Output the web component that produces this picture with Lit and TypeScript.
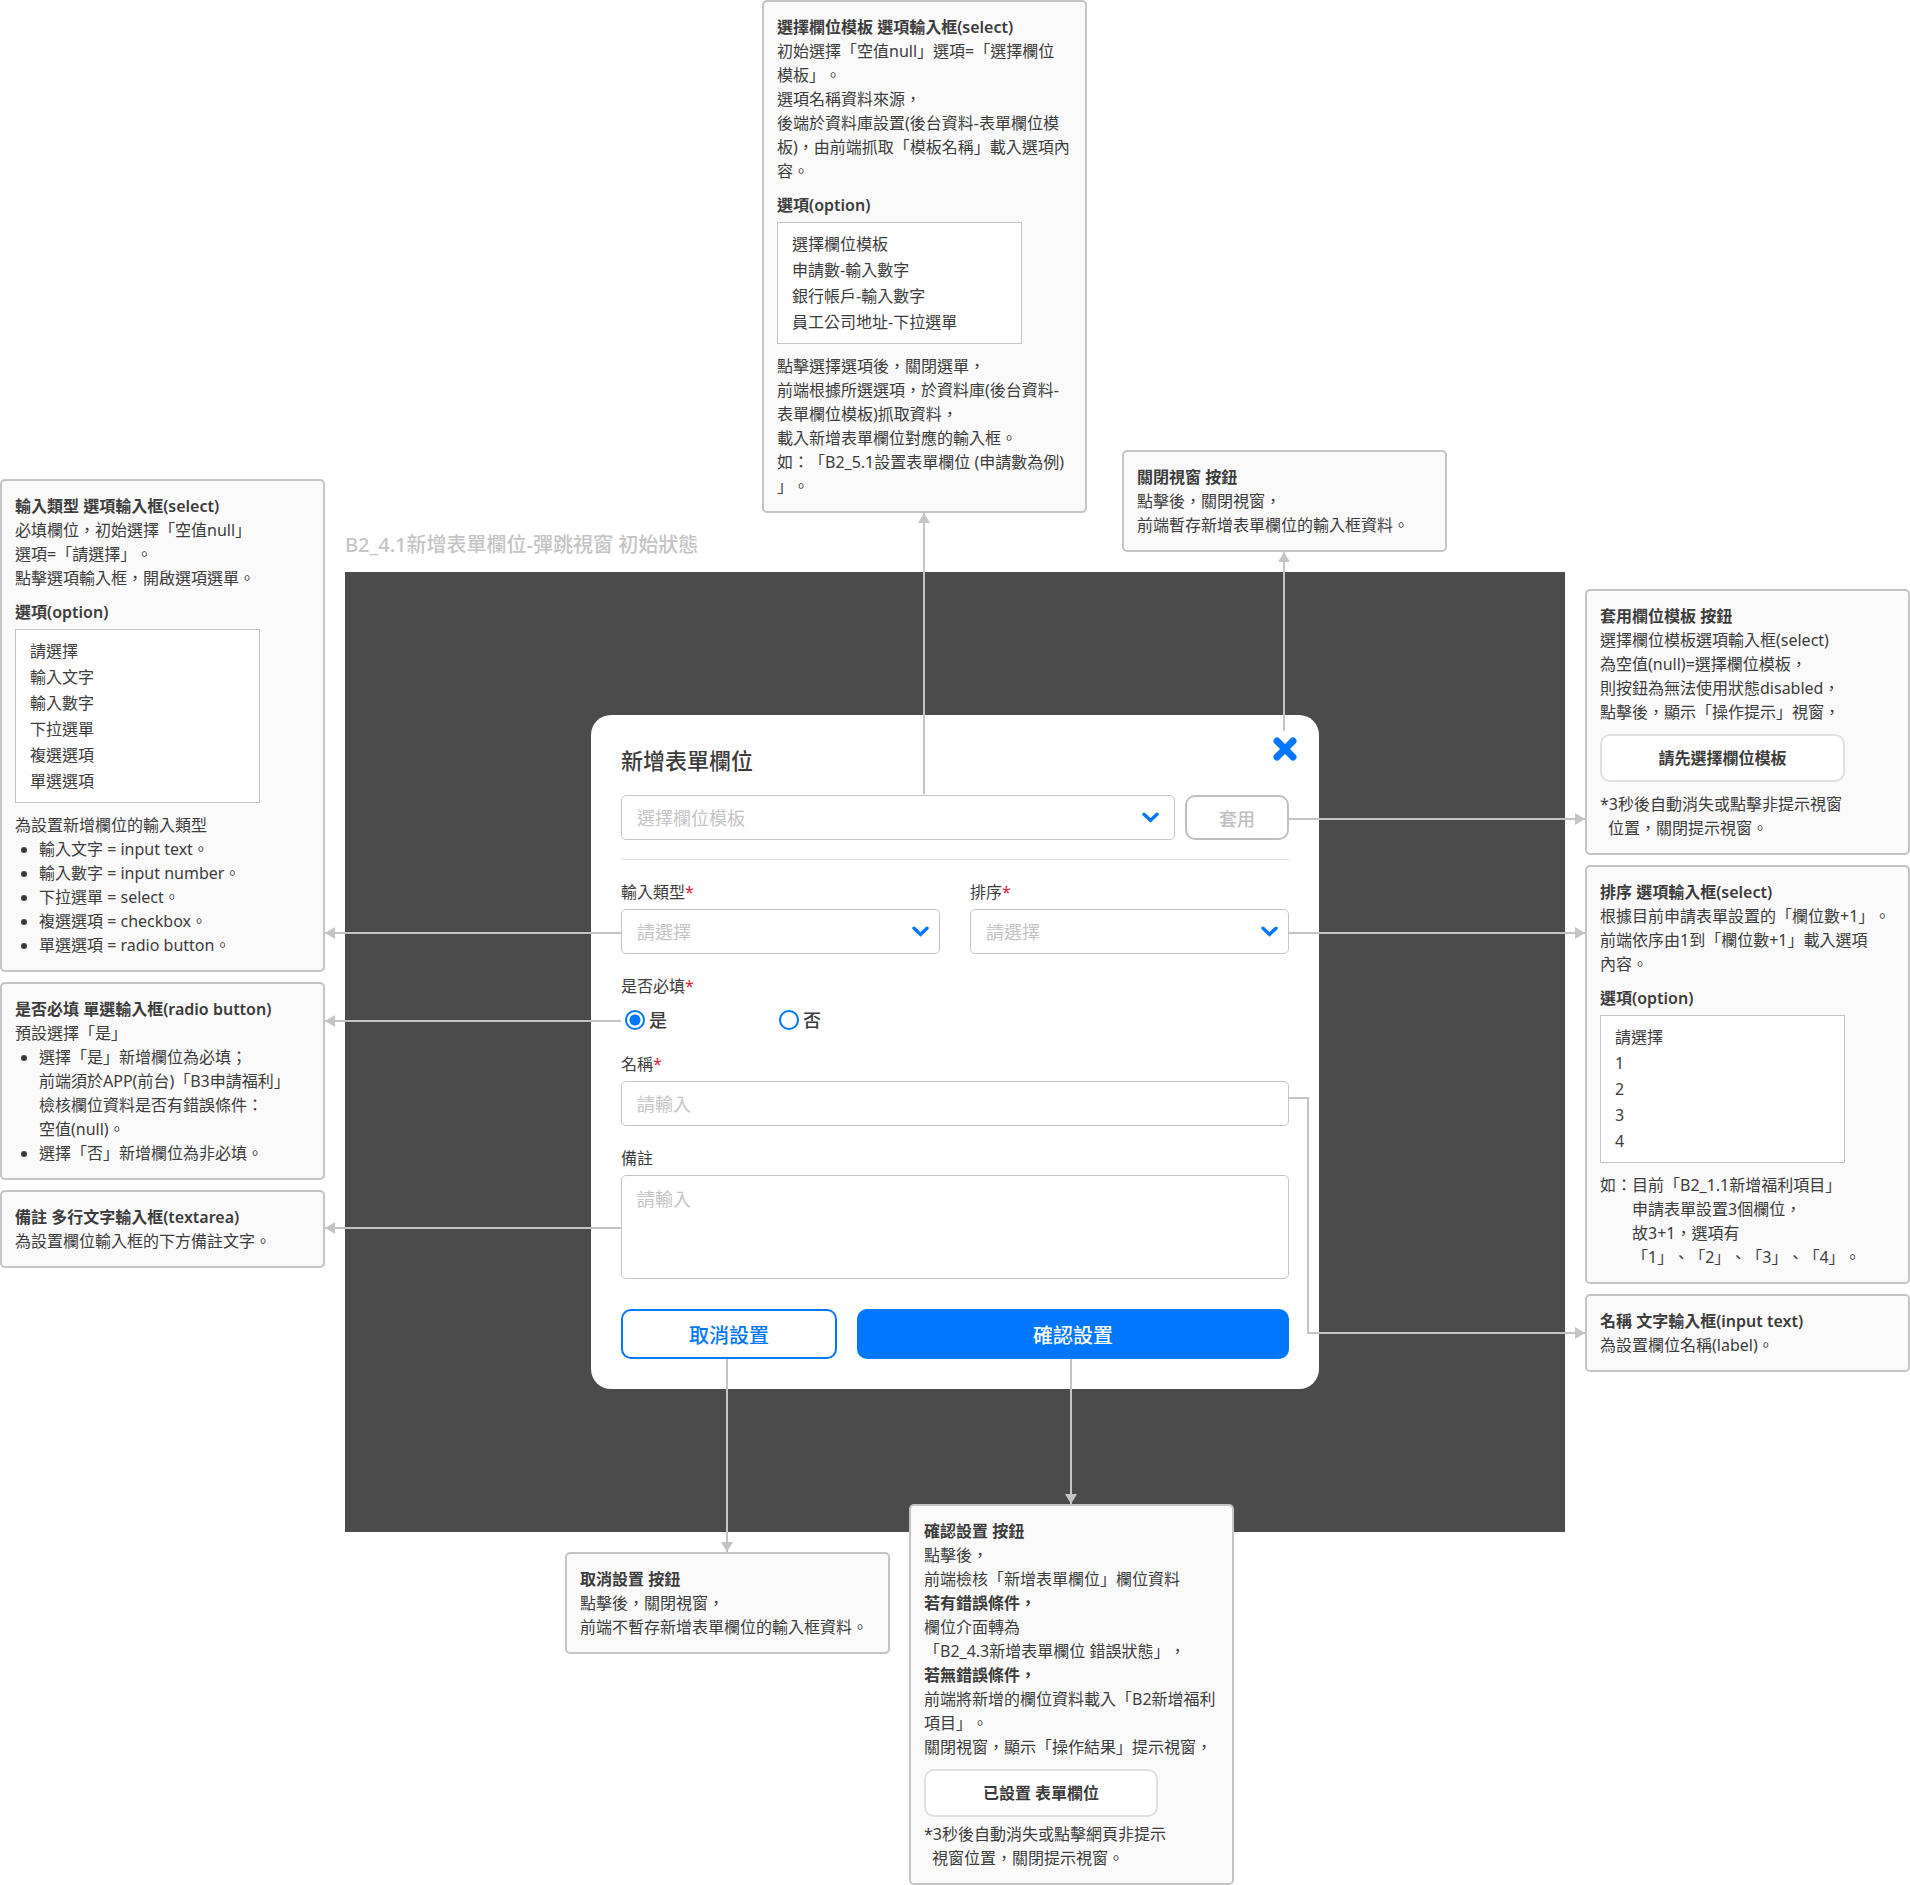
import { LitElement, html, css, svg, nothing, type TemplateResult } from "lit";
import { customElement, property } from "lit/decorators.js";

const chevron = html`<svg class="chevron" viewBox="0 0 17 11" aria-hidden="true">
  ${svg`<path d="M2 2.2 8.5 8.4 15 2.2" fill="none" stroke="#07f" stroke-width="3.4" stroke-linecap="round" />`}
</svg>`;

const lines = (rows: string[]) => rows.map((row, i) => html`${i ? html`<br />` : nothing}${row}`);

/** Annotation card: a heading followed by free content. */
@customElement("note-card")
export class NoteCard extends LitElement {
  @property() heading = "";
  /** Side on which a vertical connector leaves the card. */
  @property() arrow: "" | "down" | "up" = "";

  static styles = css`
    :host {
      display: block;
      position: relative;
      box-sizing: border-box;
      width: 325px;
      padding: 13px;
      border: 2px solid #c4c4c4;
      border-radius: 5px;
      background: #fafafa;
      font-size: 16px;
      line-height: 24px;
      white-space: nowrap;
    }
    .heading {
      margin: 0;
      font-size: 16px;
      font-weight: 600;
    }
    .stem {
      position: absolute;
      left: 50%;
      width: 2px;
      margin-left: -2px;
      height: var(--stem, 0);
      background: #c4c4c4;
    }
    .stem.down {
      top: calc(100% + 2px);
    }
    .stem.up {
      bottom: calc(100% + 2px);
    }
    .stem::before {
      content: "";
      position: absolute;
      left: -5px;
      border: 6px solid transparent;
    }
    .stem.down::before {
      top: 0;
      border-top: 0;
      border-bottom: 10px solid #c4c4c4;
    }
    .stem.up::before {
      bottom: 0;
      border-bottom: 0;
      border-top: 10px solid #c4c4c4;
    }
  `;

  render() {
    return html`
      <h2 class="heading">${this.heading}</h2>
      <slot></slot>
      ${this.arrow ? html`<span class="stem ${this.arrow}"></span>` : nothing}
    `;
  }
}

@customElement("app-root")
export class AppRoot extends LitElement {
  static styles = css`
    :host {
      display: block;
      --line: #c4c4c4;
      --blue: #07f;
      --reach: max(40px, calc(50vw - 659px));
      color: #3c3c3c;
      background: #fff;
      font-family: "Noto Sans", "Noto Sans CJK TC", sans-serif;
      font-weight: 390;
      text-spacing-trim: space-all;
    }
    * {
      box-sizing: border-box;
    }
    .board {
      display: grid;
      grid-template-columns: 325px minmax(0, 1fr) 325px;
      column-gap: 20px;
      align-items: start;
      min-width: 1480px;
    }
    .column {
      display: flex;
      flex-direction: column;
      gap: 10px;
    }
    .left {
      padding-top: 479px;
    }
    .right {
      padding-top: 589px;
    }

    /* card content */
    p,
    ul {
      margin: 0;
    }
    ul {
      padding-left: 24px;
    }
    strong {
      font-weight: 600;
    }
    .sub {
      margin: 10px 0 5px;
      font-size: 16px;
      font-weight: 600;
      line-height: 24px;
    }
    .options {
      width: 245px;
      margin-bottom: 10px;
      padding: 8px 14px;
      border: 1px solid var(--line);
      background: #fff;
      list-style: none;
      line-height: 26px;
    }
    .toast {
      display: flex;
      align-items: center;
      justify-content: center;
      width: 245px;
      height: 48px;
      margin: 10px 0;
      border: 2px solid #e0e0e0;
      border-radius: 10px;
      background: #fff;
      font-weight: 600;
    }
    .toast.tight {
      width: 234px;
      margin-bottom: 5px;
    }
    .star {
      padding-left: 8px;
      text-indent: -8px;
    }
    .example {
      padding-left: 32px;
      text-indent: -32px;
    }

    /* rows above and below the screen */
    .above {
      display: grid;
      grid-template-columns: calc(50% - 228px) 325px 325px;
      column-gap: 35px;
      align-items: end;
      padding-bottom: 12px;
    }
    .caption {
      margin: 0;
      color: var(--line);
      font-size: 20px;
      font-weight: 500;
      line-height: 30px;
      white-space: nowrap;
    }
    .template-note {
      --stem: 281px;
      margin-bottom: 47px;
    }
    .close-note {
      --stem: 179px;
      margin-bottom: 8px;
    }
    .above,
    .below {
      position: relative;
      z-index: 1;
    }
    .below {
      display: flex;
      align-items: flex-start;
      gap: 19px;
      margin-top: -28px;
      padding-left: calc(50% - 390px);
    }
    .cancel-note {
      --stem: 193px;
      margin-top: 48px;
    }
    .confirm-note {
      --stem: 145px;
    }

    /* screen with dialog */
    .screen {
      display: flex;
      align-items: center;
      justify-content: center;
      min-height: 960px;
      background: #4b4b4b;
    }
    .dialog {
      position: relative;
      width: 728px;
      padding: 30px;
      border-radius: 20px;
      background: #fff;
    }
    .title {
      margin: 0 0 20px;
      font-size: 22px;
      font-weight: 500;
      line-height: 30px;
    }
    button,
    input,
    select,
    textarea {
      font: inherit;
      color: inherit;
    }
    .close {
      position: absolute;
      top: 22px;
      right: 22px;
      width: 24px;
      height: 24px;
      padding: 0;
      border: 0;
      background: none;
    }
    .close svg {
      display: block;
    }
    .template-row {
      display: flex;
      gap: 10px;
      padding-bottom: 19px;
      border-bottom: 1px solid #e0e0e0;
    }
    .template-row .control:first-child {
      flex: 1;
    }
    .pair {
      display: grid;
      grid-template-columns: 1fr 1fr;
      gap: 30px;
    }
    .field {
      margin: 20px 0 0;
      padding: 0;
      border: 0;
      min-width: 0;
    }
    .label {
      display: block;
      margin-bottom: 5px;
      padding: 0;
      font-size: 16px;
      line-height: 24px;
    }
    .required {
      color: #dc2340;
    }
    .control {
      position: relative;
      display: flex;
    }
    .box {
      width: 100%;
      height: 45px;
      padding: 0 15px;
      border: 1px solid var(--line);
      border-radius: 5px;
      background: #fff;
      color: var(--line);
      font-size: 18px;
      appearance: none;
      outline: 0;
    }
    .box::placeholder {
      color: var(--line);
      opacity: 1;
    }
    textarea.box {
      height: 104px;
      padding: 10px 15px;
      line-height: 26px;
      resize: none;
    }
    .chevron {
      position: absolute;
      right: 11px;
      top: 17px;
      width: 17px;
      height: 11px;
      pointer-events: none;
    }
    .template-row .chevron {
      right: 16px;
    }
    .apply {
      width: 104px;
      height: 45px;
      padding: 0;
      border: 2px solid #c0c0c0;
      border-radius: 10px;
      background: #fff;
      color: #c0c0c0;
      font-size: 18px;
      font-weight: 500;
    }
    .radios {
      position: relative;
      display: flex;
      margin-top: 5px;
      padding-left: 4px;
    }
    .radio {
      display: flex;
      align-items: center;
      gap: 4px;
      width: 154px;
      font-size: 18px;
      font-weight: 500;
      line-height: 24px;
    }
    .radio input {
      appearance: none;
      width: 20px;
      height: 20px;
      margin: 0;
      border: 2px solid var(--blue);
      border-radius: 50%;
      background: #fff;
    }
    .radio input:checked {
      background: radial-gradient(circle, var(--blue) 5px, #fff 6px);
    }
    .actions {
      display: grid;
      grid-template-columns: 1fr 2fr;
      gap: 20px;
      margin-top: 30px;
    }
    .action {
      height: 50px;
      padding: 0;
      border: 2px solid var(--blue);
      border-radius: 10px;
      background: #fff;
      color: var(--blue);
      font-size: 20px;
      font-weight: 500;
    }
    .primary {
      background: var(--blue);
      color: #fff;
    }

    /* horizontal connectors reach from a control to the side columns */
    .wire {
      position: absolute;
      z-index: 1;
      top: 50%;
      width: var(--reach);
      height: 2px;
      background: var(--line);
    }
    .wire::before {
      content: "";
      position: absolute;
      top: -5px;
      border: 6px solid transparent;
    }
    .to-left {
      right: 100%;
    }
    .to-left::before {
      left: 0;
      border-left: 0;
      border-right: 10px solid var(--line);
    }
    .to-right {
      left: 100%;
    }
    .to-right::before {
      right: 0;
      border-right: 0;
      border-left: 10px solid var(--line);
    }
    .elbow {
      position: absolute;
      z-index: 1;
      top: 16px;
      left: 100%;
      width: 20px;
      height: 237px;
      border: solid var(--line);
      border-width: 2px 2px 0 0;
    }
    .elbow .wire {
      top: auto;
      bottom: 0;
      width: calc(var(--reach) - 18px);
    }
  `;

  private options(items: string[]): TemplateResult {
    return html`<h3 class="sub">選項(option)</h3>
      <ul class="options">${items.map((item) => html`<li>${item}</li>`)}</ul>`;
  }

  private select(id: string, text: string, wire: TemplateResult | typeof nothing = nothing) {
    return html`<div class="control">
      <select class="box" id=${id} aria-label=${text}><option>${text}</option></select>
      ${chevron}${wire}
    </div>`;
  }

  private label(forId: string, text: string, required = true) {
    return html`<label class="label" for=${forId}>${text}${required ? html`<span class="required">*</span>` : nothing}</label>`;
  }

  render() {
    const toLeft = html`<span class="wire to-left"></span>`;
    const toRight = html`<span class="wire to-right"></span>`;
    return html`
      <main class="board" lang="zh-TW">
        <div class="column left">
          <note-card heading="輸入類型 選項輸入框(select)">
            <p>${lines(["必填欄位，初始選擇「空值null」", "選項=「請選擇」。", "點擊選項輸入框，開啟選項選單。"])}</p>
            ${this.options(["請選擇", "輸入文字", "輸入數字", "下拉選單", "複選選項", "單選選項"])}
            <p>為設置新增欄位的輸入類型</p>
            <ul>
              <li>輸入文字 = input text。</li>
              <li>輸入數字 = input number。</li>
              <li>下拉選單 = select。</li>
              <li>複選選項 = checkbox。</li>
              <li>單選選項 = radio button。</li>
            </ul>
          </note-card>
          <note-card heading="是否必填 單選輸入框(radio button)">
            <p>預設選擇「是」</p>
            <ul>
              <li>${lines(["選擇「是」新增欄位為必填；", "前端須於APP(前台)「B3申請福利」", "檢核欄位資料是否有錯誤條件：", "空值(null)。"])}</li>
              <li>選擇「否」新增欄位為非必填。</li>
            </ul>
          </note-card>
          <note-card heading="備註 多行文字輸入框(textarea)">
            <p>為設置欄位輸入框的下方備註文字。</p>
          </note-card>
        </div>

        <div class="center">
          <div class="above">
            <h1 class="caption">B2_4.1新增表單欄位-彈跳視窗 初始狀態</h1>
            <note-card class="template-note" arrow="down" heading="選擇欄位模板 選項輸入框(select)">
              <p>${lines(["初始選擇「空值null」選項=「選擇欄位", "模板」。", "選項名稱資料來源，", "後端於資料庫設置(後台資料-表單欄位模", "板)，由前端抓取「模板名稱」載入選項內", "容。"])}</p>
              ${this.options(["選擇欄位模板", "申請數-輸入數字", "銀行帳戶-輸入數字", "員工公司地址-下拉選單"])}
              <p>${lines(["點擊選擇選項後，關閉選單，", "前端根據所選選項，於資料庫(後台資料-", "表單欄位模板)抓取資料，", "載入新增表單欄位對應的輸入框。", "如：「B2_5.1設置表單欄位 (申請數為例)", "」。"])}</p>
            </note-card>
            <note-card class="close-note" arrow="down" heading="關閉視窗 按鈕">
              <p>${lines(["點擊後，關閉視窗，", "前端暫存新增表單欄位的輸入框資料。"])}</p>
            </note-card>
          </div>

          <section class="screen">
            <form class="dialog" role="dialog" aria-labelledby="title" @submit=${(e: Event) => e.preventDefault()}>
              <h2 class="title" id="title">新增表單欄位</h2>
              <button class="close" type="button" aria-label="關閉視窗">
                <svg width="24" height="24" viewBox="0 0 24 24" aria-hidden="true">
                  <path d="M4 4 20 20M20 4 4 20" fill="none" stroke="#07f" stroke-width="7" stroke-linecap="round" />
                </svg>
              </button>
              <div class="template-row">
                ${this.select("template", "選擇欄位模板")}
                <div class="control"><button class="apply" type="button" disabled>套用</button>${toRight}</div>
              </div>
              <div class="pair">
                <div class="field">${this.label("type", "輸入類型")}${this.select("type", "請選擇", toLeft)}</div>
                <div class="field">${this.label("order", "排序")}${this.select("order", "請選擇", toRight)}</div>
              </div>
              <fieldset class="field">
                <legend class="label">是否必填<span class="required">*</span></legend>
                <div class="radios">
                  <label class="radio"><input type="radio" name="required" checked />是</label>
                  <label class="radio"><input type="radio" name="required" />否</label>
                  <span class="wire to-left"></span>
                </div>
              </fieldset>
              <div class="field">
                ${this.label("name", "名稱")}
                <div class="control">
                  <input class="box" id="name" type="text" placeholder="請輸入" />
                  <span class="elbow"><span class="wire to-right"></span></span>
                </div>
              </div>
              <div class="field">
                ${this.label("remark", "備註", false)}
                <div class="control"><textarea class="box" id="remark" placeholder="請輸入"></textarea>${toLeft}</div>
              </div>
              <div class="actions">
                <button class="action" type="button">取消設置</button>
                <button class="action primary" type="submit">確認設置</button>
              </div>
            </form>
          </section>

          <div class="below">
            <note-card class="cancel-note" arrow="up" heading="取消設置 按鈕">
              <p>${lines(["點擊後，關閉視窗，", "前端不暫存新增表單欄位的輸入框資料。"])}</p>
            </note-card>
            <note-card class="confirm-note" arrow="up" heading="確認設置 按鈕">
              <p>
                點擊後，<br />前端檢核「新增表單欄位」欄位資料<br /><strong>若有錯誤條件，</strong><br />欄位介面轉為<br />「B2_4.3新增表單欄位 錯誤狀態」，<br /><strong>若無錯誤條件，</strong><br />前端將新增的欄位資料載入「B2新增福利<br />項目」。<br />關閉視窗，顯示「操作結果」提示視窗，
              </p>
              <div class="toast tight">已設置 表單欄位</div>
              <p class="star">*3秒後自動消失或點擊網頁非提示<br />視窗位置，關閉提示視窗。</p>
            </note-card>
          </div>
        </div>

        <div class="column right">
          <note-card heading="套用欄位模板 按鈕">
            <p>${lines(["選擇欄位模板選項輸入框(select)", "為空值(null)=選擇欄位模板，", "則按鈕為無法使用狀態disabled，", "點擊後，顯示「操作提示」視窗，"])}</p>
            <div class="toast">請先選擇欄位模板</div>
            <p class="star">*3秒後自動消失或點擊非提示視窗<br />位置，關閉提示視窗。</p>
          </note-card>
          <note-card heading="排序 選項輸入框(select)">
            <p>${lines(["根據目前申請表單設置的「欄位數+1」。", "前端依序由1到「欄位數+1」載入選項", "內容。"])}</p>
            ${this.options(["請選擇", "1", "2", "3", "4"])}
            <p class="example">${lines(["如：目前「B2_1.1新增福利項目」", "申請表單設置3個欄位，", "故3+1，選項有", "「1」、「2」、「3」、「4」。"])}</p>
          </note-card>
          <note-card heading="名稱 文字輸入框(input text)">
            <p>為設置欄位名稱(label)。</p>
          </note-card>
        </div>
      </main>
    `;
  }
}
